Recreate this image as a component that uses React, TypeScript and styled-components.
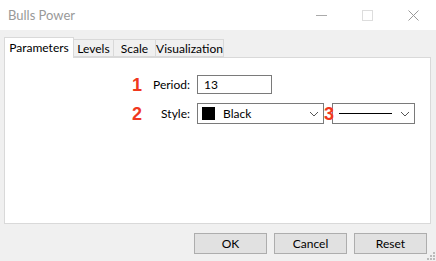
import React from 'react';
import styled, { createGlobalStyle } from 'styled-components';

const GlobalStyle = createGlobalStyle`
  html, body {
    margin: 0;
    padding: 0;
    background: #f0f0f0;
  }
  body {
    font-family: Lato, 'Liberation Sans', Arial, sans-serif;
    font-size: 12px;
    color: #000;
  }
`;

const Window = styled.div`
  width: 436px;
  height: 261px;
  display: flex;
  flex-direction: column;
  background: #f0f0f0;
  position: relative;
  overflow: hidden;
`;

const TitleBar = styled.div`
  height: 30px;
  background: #fff;
  display: flex;
  align-items: center;
  padding-left: 8px;
  box-sizing: border-box;
`;

const Title = styled.span`
  flex: 1;
  color: #999;
  font-size: 13px;
`;

const Controls = styled.div`
  display: flex;
  height: 100%;
`;

const CtrlButton = styled.div`
  width: 46px;
  height: 100%;
  display: flex;
  align-items: center;
  justify-content: center;
`;

const Body = styled.div`
  flex: 1;
  display: flex;
  flex-direction: column;
  padding: 6px 5px 0 4px;
`;

const TabRow = styled.div`
  display: flex;
  align-items: flex-end;
  height: 21px;
  position: relative;
  z-index: 2;
`;

const Tab = styled.div<{ $active?: boolean; $w: number }>`
  box-sizing: border-box;
  width: ${({ $w }) => $w}px;
  height: ${({ $active }) => ($active ? '21px' : '18px')};
  padding-top: ${({ $active }) => ($active ? '2px' : '1px')};
  text-align: center;
  background: ${({ $active }) => ($active ? '#fff' : '#f0f0f0')};
  border: 1px solid #d9d9d9;
  border-bottom: ${({ $active }) => ($active ? 'none' : '1px solid #d9d9d9')};
  margin-left: ${({ $active }) => ($active ? '0' : '-1px')};
  margin-bottom: ${({ $active }) => ($active ? '-1px' : '0')};
  line-height: 15px;
  white-space: nowrap;
`;

const Panel = styled.div`
  height: 167px;
  box-sizing: border-box;
  background: #fff;
  border: 1px solid #d9d9d9;
  padding: 17px 0 0 127px;
  display: flex;
  flex-direction: column;
  gap: 9px;
`;

const Row = styled.div`
  display: flex;
  align-items: center;
`;

const Num = styled.span<{ $w?: number }>`
  color: #f0381e;
  font-weight: bold;
  font-size: 18px;
  font-family: 'Liberation Sans', Arial, sans-serif;
  width: ${({ $w }) => $w ?? 20}px;
  line-height: 18px;
  position: relative;
  z-index: 1;
`;

const Label = styled.span`
  width: 38px;
  text-align: right;
  margin-right: 7px;
`;

const TextInput = styled.div`
  width: 75px;
  height: 19px;
  box-sizing: border-box;
  border: 1px solid #7a7a7a;
  background: #fff;
  padding-left: 6px;
  display: flex;
  align-items: center;
`;

const Select = styled.div<{ $w: number }>`
  width: ${({ $w }) => $w}px;
  height: 21px;
  box-sizing: border-box;
  border: 1px solid #7a7a7a;
  background: #fff;
  display: flex;
  align-items: center;
  padding: 0 4px 0 4px;
  gap: 8px;
`;

const Swatch = styled.span`
  width: 13px;
  height: 13px;
  background: #000;
  flex: none;
`;

const SelectText = styled.span`
  flex: 1;
`;

const LinePreview = styled.span`
  display: block;
  width: 53px;
  height: 1px;
  background: #000;
  margin-left: 2px;
  margin-right: auto;
`;

const Footer = styled.div`
  display: flex;
  justify-content: flex-end;
  gap: 7px;
  padding: 9px 4px 0 0;
`;

const Button = styled.div`
  width: 73px;
  height: 21px;
  box-sizing: border-box;
  background: #e1e1e1;
  border: 1px solid #adadad;
  display: flex;
  align-items: center;
  justify-content: center;
`;

const Grip = styled.svg`
  position: absolute;
  right: 1px;
  bottom: 1px;
`;

const Chevron = () => (
  <svg width="10" height="6" viewBox="0 0 10 6">
    <path d="M1 1 L5 5 L9 1" fill="none" stroke="#555" strokeWidth="1" />
  </svg>
);

const tabs = [
  { name: 'Parameters', w: 70 },
  { name: 'Levels', w: 41 },
  { name: 'Scale', w: 43 },
  { name: 'Visualization', w: 69 },
];

export default function App() {
  return (
    <Window>
      <GlobalStyle />
      <TitleBar>
        <Title>Bulls Power</Title>
        <Controls>
          <CtrlButton>
            <svg width="11" height="11" viewBox="0 0 11 11">
              <path d="M0 5.5 H11" stroke="#aaa" strokeWidth="1" />
            </svg>
          </CtrlButton>
          <CtrlButton>
            <svg width="11" height="11" viewBox="0 0 11 11">
              <rect x="0.5" y="0.5" width="10" height="10" fill="none" stroke="#ddd" />
            </svg>
          </CtrlButton>
          <CtrlButton>
            <svg width="11" height="11" viewBox="0 0 11 11">
              <path d="M0.5 0.5 L10.5 10.5 M10.5 0.5 L0.5 10.5" stroke="#999" strokeWidth="1" />
            </svg>
          </CtrlButton>
        </Controls>
      </TitleBar>
      <Body>
        <TabRow>
          {tabs.map((t, i) => (
            <Tab key={t.name} $w={t.w} $active={i === 0}>
              {t.name}
            </Tab>
          ))}
        </TabRow>
        <Panel>
          <Row>
            <Num>1</Num>
            <Label>Period:</Label>
            <TextInput>13</TextInput>
          </Row>
          <Row>
            <Num>2</Num>
            <Label>Style:</Label>
            <Select $w={127}>
              <Swatch />
              <SelectText>Black</SelectText>
              <Chevron />
            </Select>
            <Num $w={8}>3</Num>
            <Select $w={83}>
              <LinePreview />
              <Chevron />
            </Select>
          </Row>
        </Panel>
        <Footer>
          <Button>OK</Button>
          <Button>Cancel</Button>
          <Button>Reset</Button>
        </Footer>
      </Body>
      <Grip width="8" height="8" viewBox="0 0 8 8">
        <g fill="#bbb">
          <rect x="6" y="0" width="2" height="2" />
          <rect x="3" y="3" width="2" height="2" />
          <rect x="6" y="3" width="2" height="2" />
          <rect x="0" y="6" width="2" height="2" />
          <rect x="3" y="6" width="2" height="2" />
          <rect x="6" y="6" width="2" height="2" />
        </g>
      </Grip>
    </Window>
  );
}
